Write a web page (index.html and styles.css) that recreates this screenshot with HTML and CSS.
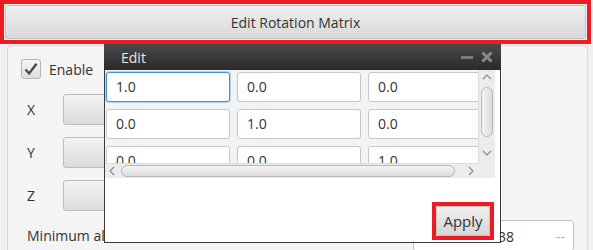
FILE: index.html
```html
<!DOCTYPE html>
<html lang="en">
<head>
    <meta charset="UTF-8">
    <title>Edit Rotation Matrix</title>
    <link rel="stylesheet" href="styles.css">
</head>
<body>
<div class="app">
    <!-- Верхняя кнопка -->
    <div class="toolbar highlight">
        <button class="toolbar-btn">Edit Rotation Matrix</button>
    </div>

    <!-- Панель настроек -->
    <div class="panel">
        <label class="check-row">
            <span class="checkbox">
                <svg width="16" height="16" viewBox="0 0 16 16"><path d="M2.5 8.5 L6.2 12.5 L13.5 2.8" fill="none" stroke="#4a4a4a" stroke-width="2.4"/></svg>
            </span>
            Enable
        </label>
        <div class="axis-row"><span class="axis-label">X</span><button class="axis-btn"></button></div>
        <div class="axis-row"><span class="axis-label">Y</span><button class="axis-btn"></button></div>
        <div class="axis-row"><span class="axis-label">Z</span><button class="axis-btn"></button></div>
        <div class="min-row">
            <span class="axis-label">Minimum altitude</span>
            <div class="num-field"><span class="value">38</span><span class="unit">--</span></div>
        </div>
    </div>

    <!-- Окно редактирования матрицы -->
    <div class="dialog">
        <div class="dialog-title">
            <span>Edit</span>
            <div class="title-icons">
                <svg width="12" height="12" viewBox="0 0 12 12"><rect x="0" y="5" width="12" height="3" fill="#7c7c7c"/></svg>
                <svg width="12" height="12" viewBox="0 0 12 12"><path d="M1.5 1.5 L10.5 10.5 M10.5 1.5 L1.5 10.5" stroke="#8a8a8a" stroke-width="3"/></svg>
            </div>
        </div>
        <div class="dialog-body">
            <div class="scroll-pane">
                <div class="viewport">
                    <div class="matrix" id="matrix"></div>
                </div>
                <div class="vbar">
                    <svg class="arrow" width="10" height="6" viewBox="0 0 10 6"><path d="M1 5 L5 1 L9 5" fill="none" stroke="#8a8a8a" stroke-width="1.2"/></svg>
                    <div class="vthumb"></div>
                    <svg class="arrow" width="10" height="6" viewBox="0 0 10 6"><path d="M1 1 L5 5 L9 1" fill="none" stroke="#8a8a8a" stroke-width="1.2"/></svg>
                </div>
                <div class="hbar">
                    <svg class="arrow" width="6" height="10" viewBox="0 0 6 10"><path d="M5 1 L1 5 L5 9" fill="none" stroke="#8a8a8a" stroke-width="1.2"/></svg>
                    <div class="hthumb"></div>
                    <svg class="arrow" width="6" height="10" viewBox="0 0 6 10"><path d="M1 1 L5 5 L1 9" fill="none" stroke="#8a8a8a" stroke-width="1.2"/></svg>
                </div>
                <div class="corner"></div>
            </div>
            <div class="dialog-footer">
                <span class="highlight apply-wrap"><button class="apply-btn">Apply</button></span>
            </div>
        </div>
    </div>
</div>

<script>
    // Единичная матрица 3x3
    const matrix = [
        [1, 0, 0],
        [0, 1, 0],
        [0, 0, 1],
    ];
    const matrixEl = document.getElementById('matrix');

    matrix.forEach((row, i) => {
        row.forEach((val, j) => {
            const cell = document.createElement('div');
            cell.classList.add('cell');
            if (i === 0 && j === 0) cell.classList.add('focused');
            cell.textContent = val.toFixed(1);
            matrixEl.appendChild(cell);
        });
    });
</script>
</body>
</html>
```

FILE: styles.css
```css
/* Общие стили */
body {
    margin: 0;
    font-family: 'Open Sans', 'Liberation Sans', sans-serif;
    font-size: 14px;
    color: #333;
    background: #f0f0f0;
    overflow: hidden;
}

.app {
    position: relative;
    width: 593px;
    height: 250px;
    overflow: hidden;
}

/* Красная рамка-выделение */
.highlight {
    border: 4px solid #ed1c24;
    box-sizing: border-box;
}

/* Верхняя кнопка */
.toolbar {
    width: 591px;
    height: 44px;
    padding: 1px;
    background: #f0f0f0;
}

.toolbar-btn {
    width: 100%;
    height: 100%;
    font-family: inherit;
    font-size: 14px;
    color: #333;
    border: 1px solid #c4c4c4;
    border-radius: 2px;
    background: linear-gradient(#efefef, #d9d9d9);
    padding: 0;
}

/* Панель */
.panel {
    margin: 1px 0 0 7px;
    width: 581px;
    height: 230px;
    box-sizing: border-box;
    border: 1px solid #d8d8d8;
    border-radius: 4px;
    background: #f4f4f4;
    padding: 13px 0 0 13px;
    display: flex;
    flex-direction: column;
}

.check-row {
    display: flex;
    align-items: center;
    gap: 8px;
    height: 20px;
    margin-bottom: 15px;
}

.checkbox {
    width: 20px;
    height: 20px;
    box-sizing: border-box;
    border: 1px solid #b4b4b4;
    border-radius: 3px;
    background: linear-gradient(#f6f6f6, #dedede);
    display: flex;
    align-items: center;
    justify-content: center;
}

.axis-row {
    display: flex;
    align-items: center;
    height: 31px;
    margin-bottom: 12px;
    padding-left: 6px;
}

.axis-label {
    width: 36px;
    white-space: nowrap;
}

.axis-btn {
    width: 380px;
    height: 31px;
    border: 1px solid #bdbdbd;
    border-radius: 3px;
    background: linear-gradient(#f3f3f3, #dcdcdc);
}

.min-row {
    display: flex;
    align-items: flex-start;
    padding-left: 6px;
    margin-top: -3px;
}

.min-row .axis-label {
    width: 386px;
    padding-top: 6px;
}

.num-field {
    width: 161px;
    height: 32px;
    box-sizing: border-box;
    border: 1px solid #c4c4c4;
    border-radius: 4px;
    background: #fff;
    display: flex;
    align-items: center;
    padding: 0 8px;
}

.num-field .value {
    flex: 1;
    text-align: right;
}

.num-field .unit {
    margin-left: 42px;
    color: #b0b0b0;
}

/* Диалог */
.dialog {
    position: absolute;
    left: 104px;
    top: 44px;
    width: 397px;
    height: 199px;
    box-sizing: border-box;
    border: 1px solid #3a3a3a;
    border-top: none;
    background: #fff;
    display: flex;
    flex-direction: column;
}

.dialog-title {
    height: 26px;
    margin: 0 -1px;
    background: linear-gradient(#4a4a4a, #2a2a2a);
    color: #e6e6e6;
    display: flex;
    align-items: center;
    justify-content: space-between;
    padding: 0 8px 0 17px;
}

.title-icons {
    display: flex;
    gap: 8px;
}

.dialog-body {
    flex: 1;
    display: flex;
    flex-direction: column;
}

.scroll-pane {
    display: grid;
    grid-template-columns: 373px 17px;
    grid-template-rows: 93px 15px;
    width: 390px;
    background: #ececec;
}

.viewport {
    overflow: hidden;
    background: #f3f3f3;
}

.matrix {
    display: grid;
    grid-template-columns: repeat(3, 124px);
    gap: 7px;
    padding: 2px 0 0 1px;
}

.cell {
    height: 30px;
    box-sizing: border-box;
    border: 1px solid #c8c8c8;
    border-radius: 3px;
    background: #fff;
    padding-left: 9px;
    line-height: 28px;
}

.cell.focused {
    border-color: #3b97d8;
    box-shadow: 0 0 0 1px rgba(59, 151, 216, 0.35);
}

.vbar {
    display: flex;
    flex-direction: column;
    align-items: center;
    padding-top: 4px;
    background: #ececec;
    border-left: 1px solid #dcdcdc;
}

.vbar .arrow:last-child {
    margin-top: 13px;
}

.vthumb {
    width: 12px;
    height: 50px;
    margin-top: 7px;
    box-sizing: border-box;
    border: 1px solid #b8b8b8;
    border-radius: 6px;
    background: linear-gradient(90deg, #f4f4f4, #dcdcdc);
}

.hbar {
    display: flex;
    align-items: center;
    padding-left: 4px;
    background: #ececec;
    border-top: 1px solid #dcdcdc;
}

.hthumb {
    width: 334px;
    height: 12px;
    margin: 0 13px 0 6px;
    box-sizing: border-box;
    border: 1px solid #b8b8b8;
    border-radius: 6px;
    background: linear-gradient(#f4f4f4, #dcdcdc);
}

.corner {
    background: #ececec;
}

.dialog-footer {
    margin-top: auto;
    display: flex;
    justify-content: flex-end;
    padding: 0 6px 2px 0;
}

.apply-wrap {
    display: inline-flex;
    padding: 0;
}

.apply-btn {
    width: 54px;
    height: 30px;
    font-family: inherit;
    font-size: 15px;
    color: #333;
    border: 1px solid #c4c4c4;
    border-radius: 2px;
    background: linear-gradient(#efefef, #d6d6d6);
    padding: 0;
}
```
